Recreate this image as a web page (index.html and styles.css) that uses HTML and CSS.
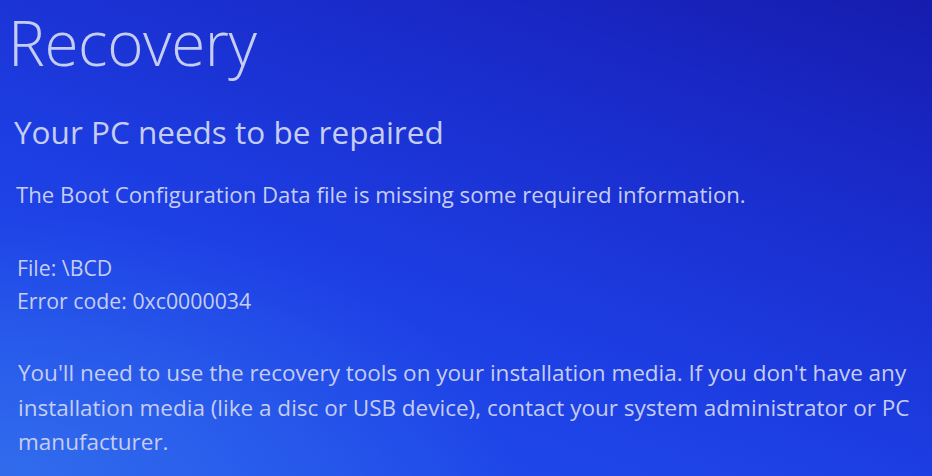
FILE: index.html
```html
<!DOCTYPE html>
<html lang="en">
<head>
<meta charset="utf-8">
<title>Recovery</title>
<link rel="stylesheet" href="styles.css">
</head>
<body>
<main class="screen">
  <h1 class="title">Recovery</h1>
  <h2 class="subtitle">Your PC needs to be repaired</h2>
  <p class="lead">The Boot Configuration Data file is missing some required information.</p>
  <div class="details">
    <p class="line">File: \BCD</p>
    <p class="line">Error code: 0xc0000034</p>
  </div>
  <p class="advice">You'll need to use the recovery tools on your installation media. If you don't have any installation media (like a disc or USB device), contact your system administrator or PC manufacturer.</p>
</main>
</body>
</html>
```
FILE: styles.css
```css
html, body {
  margin: 0;
  height: 100%;
}
body {
  background: #1a3ad0;
  overflow: hidden;
}
.screen {
  box-sizing: border-box;
  width: 932px;
  height: 476px;
  padding: 0 0 0 8px;
  color: #c6cdf2;
  font-family: "Open Sans", "Noto Sans", sans-serif;
  background:
    radial-gradient(ellipse 55% 55% at 0% 100%, rgba(52,112,236,0.85), rgba(52,112,236,0) 100%),
    linear-gradient(200deg, #161cae 0%, #1a2ccc 28%, #1d3fe4 60%, #2152ee 100%);
}
.title {
  margin: 0;
  font-size: 62px;
  font-weight: 300;
  line-height: normal;
  letter-spacing: -0.4px;
}
.subtitle {
  margin: 28px 0 0 6px;
  font-size: 31.5px;
  font-weight: 400;
  line-height: 40px;
}
.lead {
  margin: 29px 0 0 8px;
  font-size: 22.2px;
  line-height: 28px;
}
.details {
  margin: 42px 0 0 9px;
}
.line {
  margin: 0;
  font-size: 21.3px;
  line-height: 33px;
}
.advice {
  margin: 39px 0 0 10px;
  width: 900px;
  font-size: 22.5px;
  line-height: 34.5px;
}
```
